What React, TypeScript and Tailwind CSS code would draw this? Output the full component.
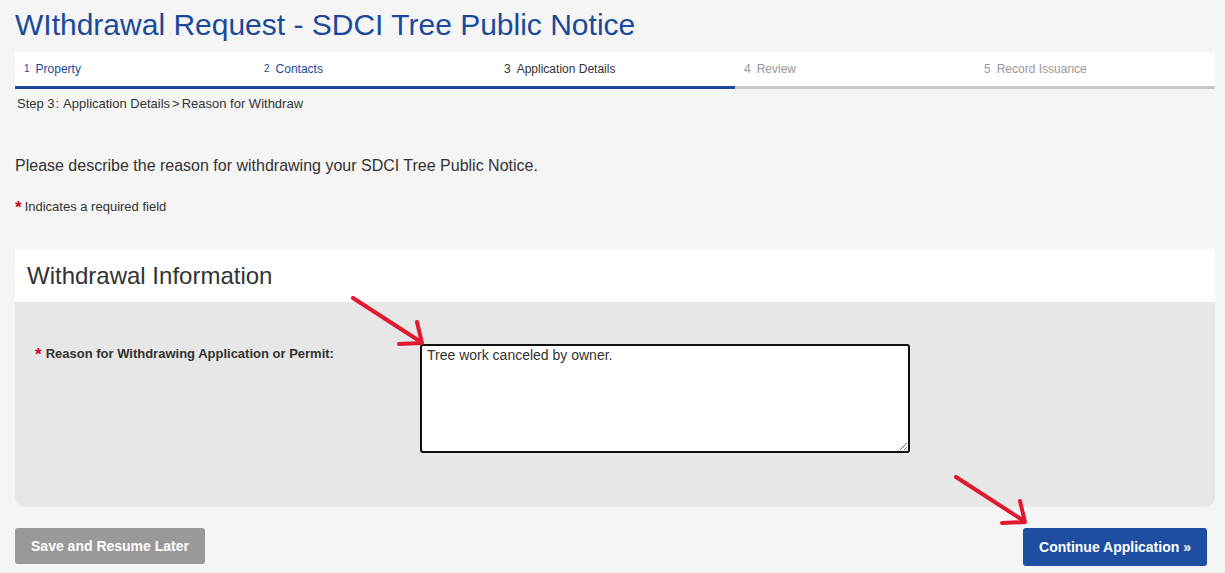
import React from "react";

const steps = [
  { n: "1", label: "Property", state: "done" },
  { n: "2", label: "Contacts", state: "done" },
  { n: "3", label: "Application Details", state: "current" },
  { n: "4", label: "Review", state: "todo" },
  { n: "5", label: "Record Issuance", state: "todo" },
];

const Arrow = ({ className }: { className: string }) => (
  <svg className={className} width="80" height="56" viewBox="0 0 80 56" fill="none">
    <path d="M2 2 L70 46" stroke="#e0192f" strokeWidth="4" strokeLinecap="round" />
    <path d="M48 48 L71 47 L66 26" stroke="#e0192f" strokeWidth="4" strokeLinecap="round" strokeLinejoin="round" />
  </svg>
);

export default function App() {
  return (
    <div className="relative min-h-[573px] w-[1225px] bg-[#f5f5f5] px-[15px] pt-[6px] font-['Liberation_Sans',Arial,sans-serif] text-[#333]">
      <h1 className="text-[30px] leading-[38px] tracking-[0px] text-[#1b4a9b]">WIthdrawal Request - SDCI Tree Public Notice</h1>

      <div className="mt-[8px] mr-[-5px] flex h-[37px] bg-white">
        {steps.map((s) => (
          <div
            key={s.n}
            className={
              "flex w-[240px] items-start pl-[9px] pt-[8px] border-b-[3px] " +
              (s.state === "todo" ? "border-[#c8c8c8] text-[#999]" : "border-[#1b4a9b] ") +
              (s.state === "done" ? "text-[#1b4a9b]" : s.state === "current" ? "text-[#333]" : "")
            }
          >
            <span className={s.state === "done" ? "mt-[1px] text-[10px]" : "text-[12px]"}>{s.n}</span>
            <span className="ml-[6px] text-[12px]">{s.label}</span>
          </div>
        ))}
      </div>

      <div className="mt-[5px] pl-[2px] text-[13px]">
        Step 3<span className="mx-[1px]">:</span> Application Details<span className="mx-[2px]">&gt;</span>Reason for Withdraw
      </div>

      <p className="mt-[40px] text-[16px]">Please describe the reason for withdrawing your SDCI Tree Public Notice.</p>

      <div className="mt-[19px] flex items-center text-[13px]">
        <span className="mr-[3px] mt-[2px] text-[17px] font-bold leading-none text-[#d0021b]">*</span>
        <span>Indicates a required field</span>
      </div>

      <div className="mt-[33px] w-[1200px]">
        <div className="flex h-[53px] items-center bg-white pl-[12px]">
          <h2 className="text-[24px] text-[#333]">Withdrawal Information</h2>
        </div>
        <div className="flex h-[205px] rounded-b-[10px] bg-[#e7e7e7] pl-[20px] pt-[42px]">
          <label className="flex w-[385px] items-start text-[13px] font-bold text-[#333]">
            <span className="mr-[4px] mt-[-2px] text-[17px] text-[#d0021b]">*</span>
            <span>Reason for Withdrawing Application or Permit:</span>
          </label>
          <textarea
            className="h-[109px] w-[490px] resize-y rounded-[3px] border-2 border-[#111] bg-white px-[5px] py-0 text-[14px] leading-[18px] text-[#333] outline-none"
            defaultValue="Tree work canceled by owner."
          />
        </div>
      </div>

      <div className="mt-[21px] flex w-[1192px] justify-between">
        <button className="h-[36px] w-[190px] rounded-[3px] bg-[#999] text-[14px] font-bold text-white">
          Save and Resume Later
        </button>
        <button className="h-[38px] w-[184px] rounded-[3px] bg-[#1d4e9f] text-[14px] font-bold text-white">
          Continue Application »
        </button>
      </div>

      <Arrow className="absolute left-[351px] top-[296px]" />
      <Arrow className="absolute left-[954px] top-[475px]" />
    </div>
  );
}
